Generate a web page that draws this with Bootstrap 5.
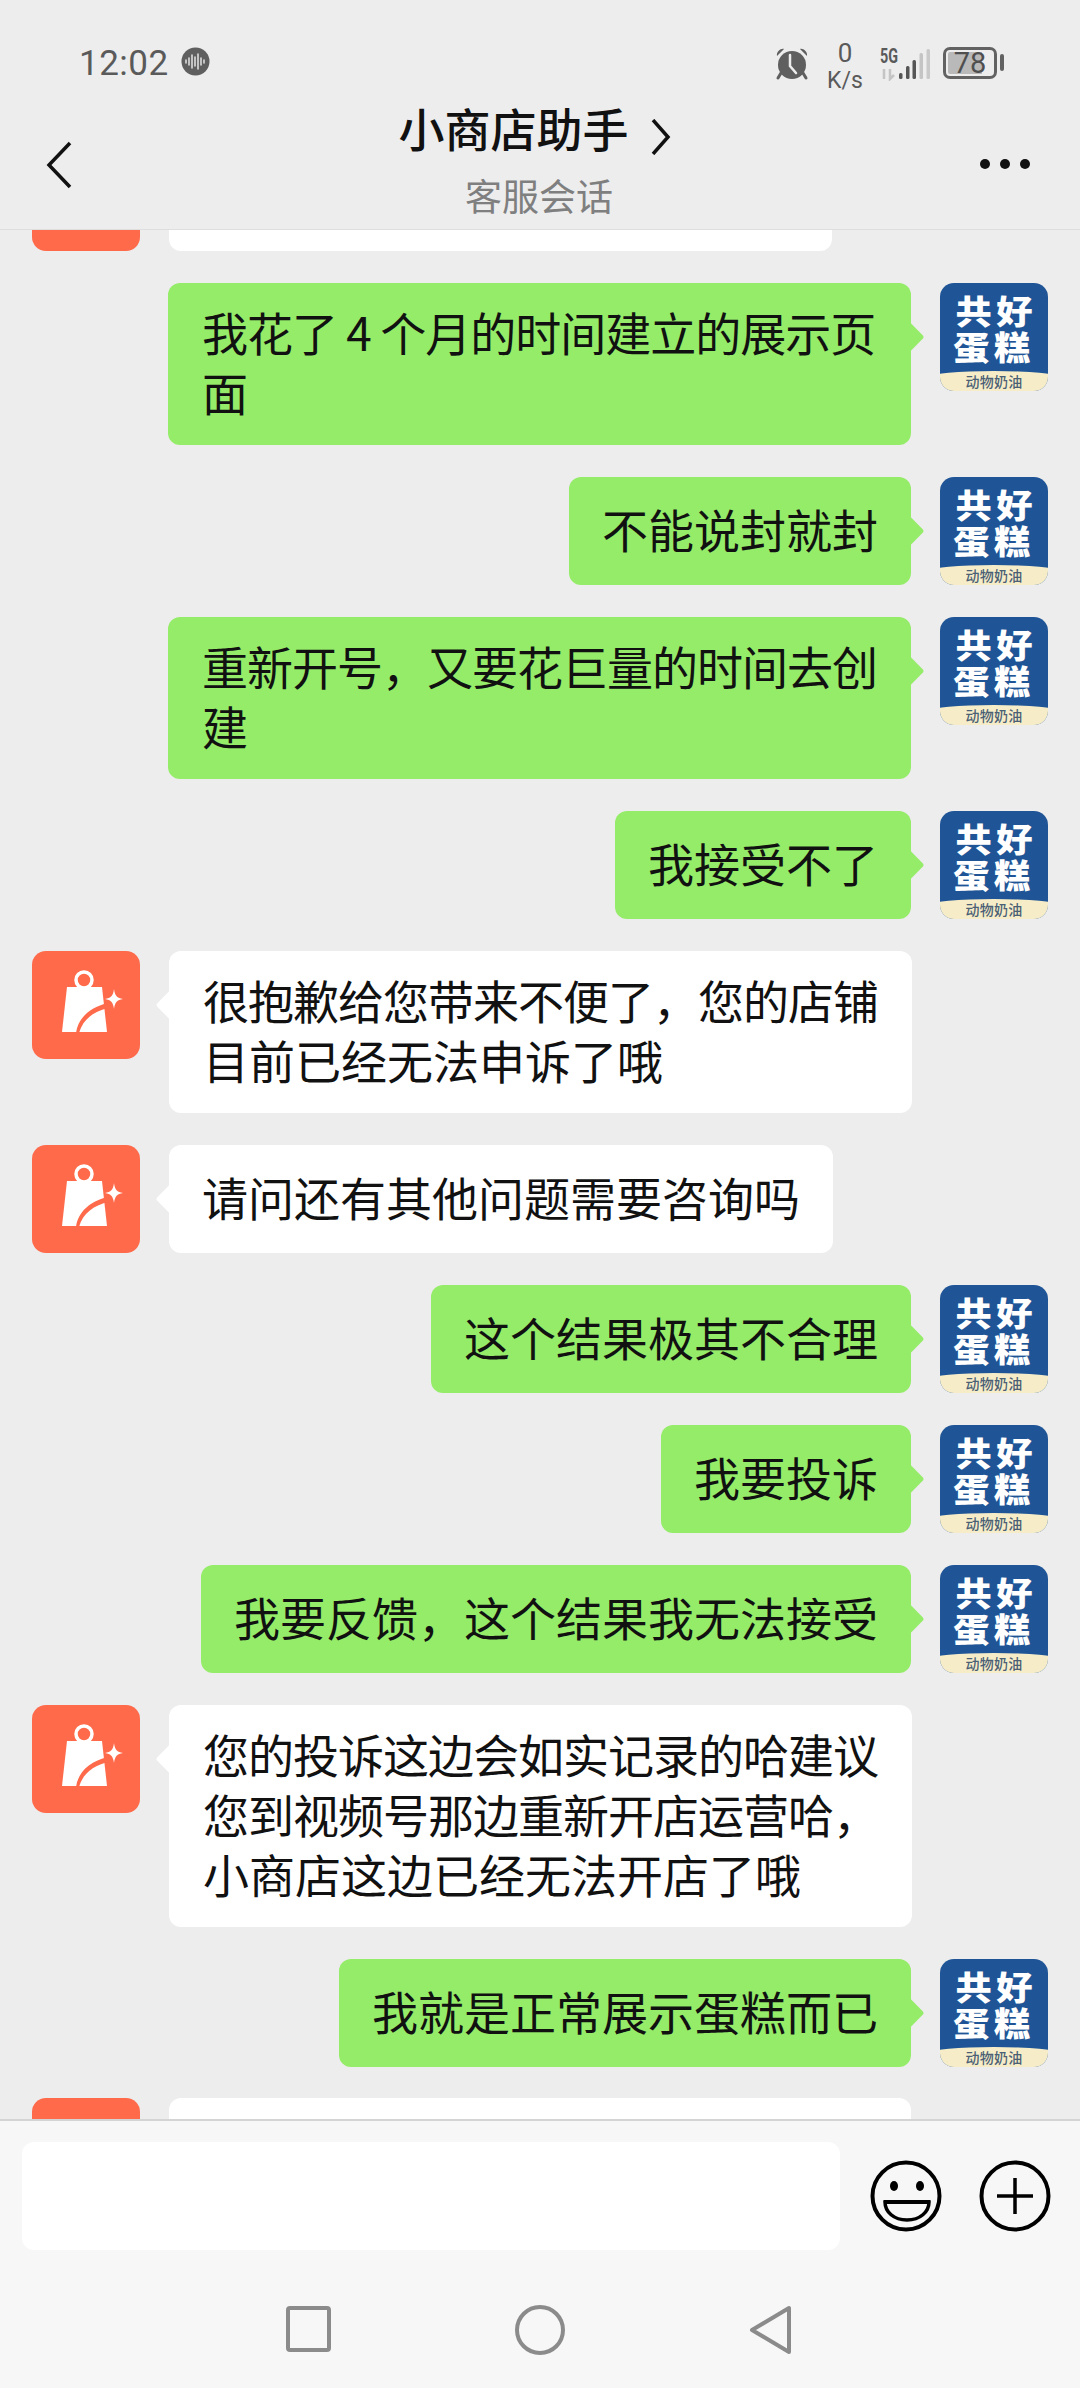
<!DOCTYPE html>
<html lang="zh">
<head>
  <meta charset="UTF-8">
  <meta name="viewport" content="width=device-width, initial-scale=1.0">
  <title>小商店助手</title>
  <link href="https://cdn.jsdelivr.net/npm/bootstrap@5.3.2/dist/css/bootstrap.min.css" rel="stylesheet">
  <style>
    html, body { width: 1080px; height: 2388px; overflow: hidden; }
    body { background: #ededed; font-family: "Noto Sans CJK SC", "Noto Sans", sans-serif; color: #111; }
    .app { height: 2388px; }
    .top-area { height: 230px; flex: none; background: #ededed; border-bottom: 1px solid #dedede; }
    .status-row { height: 100px; padding: 43px 76px 0 79px; font-family: Roboto, sans-serif; color: #5a5a5a; }
    .clock { font-size: 35px; line-height: 42px; letter-spacing: 0.5px; margin-right: 4px; }
    .speed { width: 40px; margin: -4px 14px 0 16px; font-size: 23px; line-height: 27px; text-align: center; }
    .speed b { display: block; font-weight: 400; font-size: 26px; line-height: 28px; }
    .batt { width: 54px; height: 32px; border: 3px solid #626262; border-radius: 7px; padding: 2px; margin-left: 12px; }
    .batt-fill { height: 100%; background: linear-gradient(to right, #b9b9b9 78%, transparent 78%); border-radius: 2px; font-size: 29px; line-height: 22px; text-align: center; color: #4f4f4f; }
    .batt-tip { width: 4px; height: 17px; margin-left: 3px; background: #626262; border-radius: 2px; }
    .nav-row { height: 129px; padding: 0 50px 0 46px; }
    .title-box { text-align: center; padding-top: 2px; }
    .title-line { font-size: 46px; line-height: 50px; font-weight: 500; gap: 22px; padding-left: 17px; }
    .title-line svg { margin-top: 10px; margin-bottom: -9px; }
    .sub-line { font-size: 37px; line-height: 44px; color: #7f7f7f; margin-top: 21px; padding-left: 26px; }
    .chat-area { flex: 1 1 auto; min-height: 0; overflow: hidden; gap: 32px; padding: 0 32px; }
    .msg-row { gap: 29px; flex: none; }
    .stub-top { height: 21px; align-items: flex-end; }
    .stub-bottom { height: 21px; margin-top: -1px; }
    .ava { width: 108px; height: 108px; flex: none; border-radius: 14px; overflow: hidden; }
    .ava-shop { background: #ff6a4b; }
    .ava-stub { height: 100%; }
    .stub-top .ava-stub { border-radius: 0 0 14px 14px; }
    .stub-bottom .ava-stub { border-radius: 14px 14px 0 0; }
    .ava-cake { background: #1f5596; color: #fff; text-align: center; }
    .cake-name { height: 90px; padding-top: 9px; font-weight: 900; font-size: 33px; line-height: 36px; letter-spacing: 4px; text-indent: 4px; transform: scaleX(1.1); }
    .cake-band { height: 22px; margin: -2px -10px 0; padding-top: 2px; background: #f6edc8; border-radius: 50% 50% 0 0 / 6px 6px 0 0; color: #4b5f75; font-size: 14px; line-height: 17px; letter-spacing: 0.3px; font-weight: 500; }
    .bubble { position: relative; width: 743px; min-height: 108px; padding: 18px 33px 24px 34px; border-radius: 12px; font-size: 46px; line-height: 60px; white-space: nowrap; }
    .bubble.single { width: auto; padding: 21px 33px 27px; }
    .tight { letter-spacing: -1px; }
    .bubble-me { background: #95ec69; }
    .bubble-shop { background: #fff; }
    .bubble::after { content: ""; position: absolute; top: 43px; width: 22px; height: 22px; border-radius: 3px; transform: rotate(45deg); }
    .bubble-me::after { right: -9px; background: #95ec69; }
    .bubble-shop::after { left: -9px; background: #fff; }
    .stub-bubble { min-height: 0; height: 100%; padding: 0; }
    .stub-bubble::after { display: none; }
    .stub-top .stub-bubble { border-radius: 0 0 12px 12px; width: 663px; }
    .stub-bottom .stub-bubble { border-radius: 12px 12px 0 0; width: 742px; }
    .bottom-area { height: 269px; flex: none; background: #f7f7f7; border-top: 2px solid #d4d4d4; }
    .input-row { padding: 21px 29px 0 22px; }
    .input-fake { width: 819px; height: 108px; background: #fff; border-radius: 12px; }
    .input-icons { margin-left: 30px; gap: 37px; }
    .sys-nav { gap: 184px; margin-top: 55px; padding-right: 3px; }
  </style>
</head>
<body>
  <div class="app d-flex flex-column">
    <div class="top-area">
      <div class="status-row d-flex justify-content-between">
        <div class="d-flex align-items-start gap-2">
          <span class="clock">12:02</span>
          <svg width="29" height="29" viewBox="0 0 29 29" class="mt-1">
            <circle cx="14.500" cy="14.500" r="14" fill="#5f5f5f"/>
            <path d="M5 13v3M8 11v7M11 8v13M14 10v9M17 7v15M20 11v7M23 13v3" stroke="#ddd" stroke-width="1.600" stroke-linecap="round"/>
          </svg>
        </div>
        <div class="d-flex align-items-start">
          <svg width="34" height="34" viewBox="0 0 34 34" class="mt-1">
            <path d="M2 9 9 2c-3-1-8 3-7 7zM32 9l-7-7c3-1 8 3 7 7z" fill="#5f5f5f"/>
            <path d="M6 26l-3 5M28 26l3 5" stroke="#5f5f5f" stroke-width="3" stroke-linecap="round"/>
            <circle cx="17" cy="18" r="14" fill="#5f5f5f"/>
            <path d="M15 8v11l6 7" fill="none" stroke="#ededed" stroke-width="2.500" stroke-linecap="round"/>
          </svg>
          <div class="speed"><b>0</b>K/s</div>
          <svg width="52" height="38" viewBox="880 43 52 38">
            <text x="881" y="63" font-family="Roboto, sans-serif" font-size="20" font-weight="700" fill="#5a5a5a" textLength="18" lengthAdjust="spacingAndGlyphs">5G</text>
            <path d="M885 69v10M891 69v10l4-4" stroke="#c4c4c4" stroke-width="2.500" fill="none"/>
            <rect x="900" y="73" width="3.500" height="6" rx="1.500" fill="#555"/>
            <rect x="907" y="66" width="3.500" height="13" rx="1.500" fill="#555"/>
            <rect x="913.500" y="60" width="3.500" height="19" rx="1.500" fill="#555"/>
            <rect x="920.500" y="53" width="3.500" height="26" rx="1.500" fill="#c4c4c4"/>
            <rect x="927.500" y="49" width="3.500" height="30" rx="1.500" fill="#c9c9c9"/>
          </svg>
          <div class="batt mt-1"><div class="batt-fill">78</div></div>
          <div class="batt-tip" style="margin-top: 11px"></div>
        </div>
      </div>
      <div class="nav-row d-flex justify-content-between align-items-start">
        <svg width="26" height="48" viewBox="0 0 26 48" style="margin-top: 41px">
          <path d="M24 2 3 24l21 22" fill="none" stroke="#111" stroke-width="3.500"/>
        </svg>
        <div class="title-box">
          <div class="title-line d-flex align-items-center">
            <span>小商店助手</span>
            <svg width="20" height="36" viewBox="0 0 20 36"><path d="M2 1l15 17L2 35" fill="none" stroke="#111" stroke-width="3.500"/></svg>
          </div>
          <div class="sub-line">客服会话</div>
        </div>
        <svg width="50" height="12" viewBox="0 0 50 12" style="margin-top: 58px">
          <circle cx="5" cy="6" r="5" fill="#111"/><circle cx="25" cy="6" r="5" fill="#111"/><circle cx="45" cy="6" r="5" fill="#111"/>
        </svg>
      </div>
    </div>

    <div id="chat" class="chat-area d-flex flex-column"></div>

    <div class="bottom-area">
      <div class="input-row d-flex align-items-center">
        <div class="input-fake"></div>
        <div class="input-icons d-flex">
          <svg width="72" height="72" viewBox="0 0 72 72">
            <circle cx="36" cy="36" r="33.500" fill="none" stroke="#000" stroke-width="4"/>
            <ellipse cx="24" cy="26" rx="4" ry="5" fill="#000"/><ellipse cx="50" cy="26" rx="4" ry="5" fill="#000"/>
            <path d="M15 42h44c0 10-9 18-22 18S15 52 15 42z" fill="none" stroke="#000" stroke-width="3.500"/>
            <path d="M14 40h46v4H14z" fill="#000"/>
          </svg>
          <svg width="72" height="72" viewBox="0 0 72 72">
            <circle cx="36" cy="36" r="33.500" fill="none" stroke="#000" stroke-width="4"/>
            <path d="M36 18v36M18 36h36" stroke="#000" stroke-width="3.500"/>
          </svg>
        </div>
      </div>
      <div class="sys-nav d-flex justify-content-center">
        <svg width="45" height="48" viewBox="0 0 45 48"><rect x="2" y="3" width="41" height="42" rx="2" fill="none" stroke="#8b8b8b" stroke-width="4"/></svg>
        <svg width="50" height="50" viewBox="0 0 50 50"><circle cx="25" cy="25" r="23" fill="none" stroke="#8b8b8b" stroke-width="4"/></svg>
        <svg width="42" height="50" viewBox="0 0 42 50"><path d="M40 3v44L3 25z" fill="none" stroke="#8b8b8b" stroke-width="4" stroke-linejoin="round"/></svg>
      </div>
    </div>
  </div>

  <script src="https://cdn.jsdelivr.net/npm/bootstrap@5.3.2/dist/js/bootstrap.bundle.min.js"></script>
  <script>
    // lines: the long first lines are squeezed in the original, so they get .tight
    const messages = [
      { me: true, lines: ['我花了 4 个月的时间建立的展示页', '面'] },
      { me: true, lines: ['不能说封就封'] },
      { me: true, lines: ['重新开号，又要花巨量的时间去创', '建'] },
      { me: true, lines: ['我接受不了'] },
      { me: false, lines: ['很抱歉给您带来不便了，您的店铺', '目前已经无法申诉了哦'] },
      { me: false, lines: ['请问还有其他问题需要咨询吗'] },
      { me: true, lines: ['这个结果极其不合理'] },
      { me: true, lines: ['我要投诉'] },
      { me: true, lines: ['我要反馈，这个结果我无法接受'] },
      { me: false, lines: ['您的投诉这边会如实记录的哈建议', '您到视频号那边重新开店运营哈，', '小商店这边已经无法开店了哦'] },
      { me: true, lines: ['我就是正常展示蛋糕而已'] }
    ];

    const shopAvatar = `<div class="ava ava-shop">
      <svg width="108" height="108" viewBox="0 0 108 108">
        <circle cx="52" cy="29" r="8" fill="none" stroke="#fff" stroke-width="3.500"/>
        <path d="M35 36h35l5 45H30z" fill="#fff"/>
        <path d="M44 82c2-15 14-26 32-30l1 5c-15 3-26 11-30 25z" fill="#ff6a4b"/>
        <path d="M82 38c1 7 3 9 9 10-6 1-8 3-9 10-1-7-3-9-9-10 6-1 8-3 9-10z" fill="#fff"/>
      </svg>
    </div>`;

    const cakeAvatar = `<div class="ava ava-cake">
      <div class="cake-name">共好<br>蛋糕</div>
      <div class="cake-band">动物奶油</div>
    </div>`;

    function lineHtml(line) {
      return line.length >= 15 ? `<span class="tight">${line}</span>` : line;
    }

    const chat = document.getElementById('chat');
    let html = `<div class="msg-row stub-top d-flex">
      <div class="ava ava-shop ava-stub"></div>
      <div class="bubble bubble-shop stub-bubble"></div>
    </div>`;
    messages.forEach(m => {
      const cls = m.me ? 'bubble-me' : 'bubble-shop';
      const single = m.lines.length === 1 ? ' single' : '';
      const bubble = `<div class="bubble ${cls}${single}">${m.lines.map(lineHtml).join('<br>')}</div>`;
      html += m.me
        ? `<div class="msg-row d-flex justify-content-end align-items-start">${bubble}${cakeAvatar}</div>`
        : `<div class="msg-row d-flex align-items-start">${shopAvatar}${bubble}</div>`;
    });
    html += `<div class="msg-row stub-bottom d-flex">
      <div class="ava ava-shop ava-stub"></div>
      <div class="bubble bubble-shop stub-bubble"></div>
    </div>`;
    chat.innerHTML = html;
  </script>
</body>
</html>
